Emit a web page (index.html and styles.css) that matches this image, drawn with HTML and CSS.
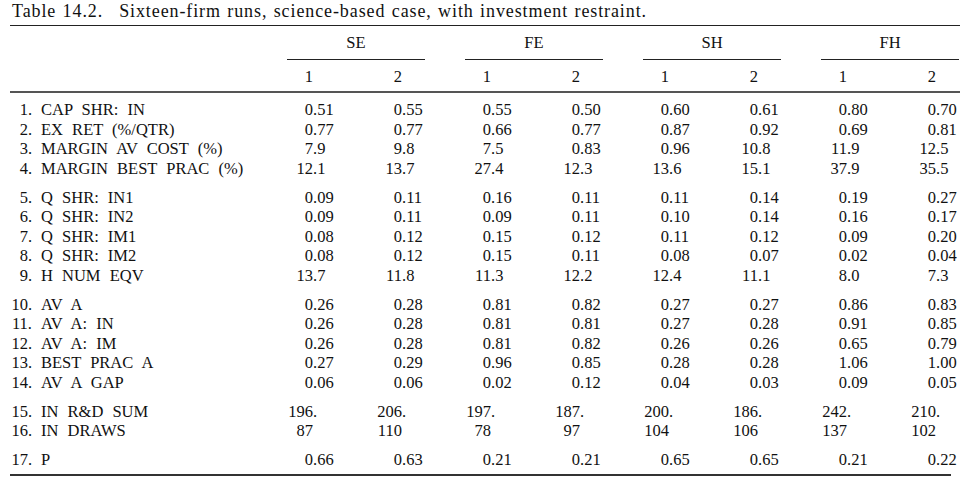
FILE: index.html
```html
<!DOCTYPE html>
<html lang="en">
<head>
<meta charset="utf-8">
<title>Table 14.2</title>
<link rel="stylesheet" href="styles.css">
</head>
<body>
<div class="page">
  <h1 class="title"><span class="tnum">Table 14.2.</span>Sixteen-firm runs, science-based case, with investment restraint.</h1>
  <div class="thead">
    <div class="row groups">
      <div class="lab"></div>
      <div class="grp">SE</div>
      <div class="grp">FE</div>
      <div class="grp">SH</div>
      <div class="grp">FH</div>
    </div>
    <div class="row subs">
      <div class="lab"></div>
      <div class="v"><span class="i">1</span></div>
      <div class="v"><span class="i">2</span></div>
      <div class="v"><span class="i">1</span></div>
      <div class="v"><span class="i">2</span></div>
      <div class="v"><span class="i">1</span></div>
      <div class="v"><span class="i">2</span></div>
      <div class="v"><span class="i">1</span></div>
      <div class="v"><span class="i">2</span></div>
    </div>
  </div>
  <div class="tbody">
    <div class="sect">
      <div class="row"><div class="lab"><span class="n">1.</span>CAP SHR: IN</div>
        <div class="v"><span class="i">0</span>.51</div><div class="v"><span class="i">0</span>.55</div><div class="v"><span class="i">0</span>.55</div><div class="v"><span class="i">0</span>.50</div><div class="v"><span class="i">0</span>.60</div><div class="v"><span class="i">0</span>.61</div><div class="v"><span class="i">0</span>.80</div><div class="v"><span class="i">0</span>.70</div></div>
      <div class="row"><div class="lab"><span class="n">2.</span>EX RET (%/QTR)</div>
        <div class="v"><span class="i">0</span>.77</div><div class="v"><span class="i">0</span>.77</div><div class="v"><span class="i">0</span>.66</div><div class="v"><span class="i">0</span>.77</div><div class="v"><span class="i">0</span>.87</div><div class="v"><span class="i">0</span>.92</div><div class="v"><span class="i">0</span>.69</div><div class="v"><span class="i">0</span>.81</div></div>
      <div class="row"><div class="lab"><span class="n">3.</span>MARGIN AV COST (%)</div>
        <div class="v"><span class="i">7</span>.9</div><div class="v"><span class="i">9</span>.8</div><div class="v"><span class="i">7</span>.5</div><div class="v"><span class="i">0</span>.83</div><div class="v"><span class="i">0</span>.96</div><div class="v"><span class="i">10</span>.8</div><div class="v"><span class="i">11</span>.9</div><div class="v"><span class="i">12</span>.5</div></div>
      <div class="row"><div class="lab"><span class="n">4.</span>MARGIN BEST PRAC (%)</div>
        <div class="v"><span class="i">12</span>.1</div><div class="v"><span class="i">13</span>.7</div><div class="v"><span class="i">27</span>.4</div><div class="v"><span class="i">12</span>.3</div><div class="v"><span class="i">13</span>.6</div><div class="v"><span class="i">15</span>.1</div><div class="v"><span class="i">37</span>.9</div><div class="v"><span class="i">35</span>.5</div></div>
    </div>
    <div class="sect">
      <div class="row"><div class="lab"><span class="n">5.</span>Q SHR: IN1</div>
        <div class="v"><span class="i">0</span>.09</div><div class="v"><span class="i">0</span>.11</div><div class="v"><span class="i">0</span>.16</div><div class="v"><span class="i">0</span>.11</div><div class="v"><span class="i">0</span>.11</div><div class="v"><span class="i">0</span>.14</div><div class="v"><span class="i">0</span>.19</div><div class="v"><span class="i">0</span>.27</div></div>
      <div class="row"><div class="lab"><span class="n">6.</span>Q SHR: IN2</div>
        <div class="v"><span class="i">0</span>.09</div><div class="v"><span class="i">0</span>.11</div><div class="v"><span class="i">0</span>.09</div><div class="v"><span class="i">0</span>.11</div><div class="v"><span class="i">0</span>.10</div><div class="v"><span class="i">0</span>.14</div><div class="v"><span class="i">0</span>.16</div><div class="v"><span class="i">0</span>.17</div></div>
      <div class="row"><div class="lab"><span class="n">7.</span>Q SHR: IM1</div>
        <div class="v"><span class="i">0</span>.08</div><div class="v"><span class="i">0</span>.12</div><div class="v"><span class="i">0</span>.15</div><div class="v"><span class="i">0</span>.12</div><div class="v"><span class="i">0</span>.11</div><div class="v"><span class="i">0</span>.12</div><div class="v"><span class="i">0</span>.09</div><div class="v"><span class="i">0</span>.20</div></div>
      <div class="row"><div class="lab"><span class="n">8.</span>Q SHR: IM2</div>
        <div class="v"><span class="i">0</span>.08</div><div class="v"><span class="i">0</span>.12</div><div class="v"><span class="i">0</span>.15</div><div class="v"><span class="i">0</span>.11</div><div class="v"><span class="i">0</span>.08</div><div class="v"><span class="i">0</span>.07</div><div class="v"><span class="i">0</span>.02</div><div class="v"><span class="i">0</span>.04</div></div>
      <div class="row"><div class="lab"><span class="n">9.</span>H NUM EQV</div>
        <div class="v"><span class="i">13</span>.7</div><div class="v"><span class="i">11</span>.8</div><div class="v"><span class="i">11</span>.3</div><div class="v"><span class="i">12</span>.2</div><div class="v"><span class="i">12</span>.4</div><div class="v"><span class="i">11</span>.1</div><div class="v"><span class="i">8</span>.0</div><div class="v"><span class="i">7</span>.3</div></div>
    </div>
    <div class="sect">
      <div class="row"><div class="lab"><span class="n">10.</span>AV A</div>
        <div class="v"><span class="i">0</span>.26</div><div class="v"><span class="i">0</span>.28</div><div class="v"><span class="i">0</span>.81</div><div class="v"><span class="i">0</span>.82</div><div class="v"><span class="i">0</span>.27</div><div class="v"><span class="i">0</span>.27</div><div class="v"><span class="i">0</span>.86</div><div class="v"><span class="i">0</span>.83</div></div>
      <div class="row"><div class="lab"><span class="n">11.</span>AV A: IN</div>
        <div class="v"><span class="i">0</span>.26</div><div class="v"><span class="i">0</span>.28</div><div class="v"><span class="i">0</span>.81</div><div class="v"><span class="i">0</span>.81</div><div class="v"><span class="i">0</span>.27</div><div class="v"><span class="i">0</span>.28</div><div class="v"><span class="i">0</span>.91</div><div class="v"><span class="i">0</span>.85</div></div>
      <div class="row"><div class="lab"><span class="n">12.</span>AV A: IM</div>
        <div class="v"><span class="i">0</span>.26</div><div class="v"><span class="i">0</span>.28</div><div class="v"><span class="i">0</span>.81</div><div class="v"><span class="i">0</span>.82</div><div class="v"><span class="i">0</span>.26</div><div class="v"><span class="i">0</span>.26</div><div class="v"><span class="i">0</span>.65</div><div class="v"><span class="i">0</span>.79</div></div>
      <div class="row"><div class="lab"><span class="n">13.</span>BEST PRAC A</div>
        <div class="v"><span class="i">0</span>.27</div><div class="v"><span class="i">0</span>.29</div><div class="v"><span class="i">0</span>.96</div><div class="v"><span class="i">0</span>.85</div><div class="v"><span class="i">0</span>.28</div><div class="v"><span class="i">0</span>.28</div><div class="v"><span class="i">1</span>.06</div><div class="v"><span class="i">1</span>.00</div></div>
      <div class="row"><div class="lab"><span class="n">14.</span>AV A GAP</div>
        <div class="v"><span class="i">0</span>.06</div><div class="v"><span class="i">0</span>.06</div><div class="v"><span class="i">0</span>.02</div><div class="v"><span class="i">0</span>.12</div><div class="v"><span class="i">0</span>.04</div><div class="v"><span class="i">0</span>.03</div><div class="v"><span class="i">0</span>.09</div><div class="v"><span class="i">0</span>.05</div></div>
    </div>
    <div class="sect">
      <div class="row"><div class="lab"><span class="n">15.</span>IN R&amp;D SUM</div>
        <div class="v"><span class="i">196</span>.</div><div class="v"><span class="i">206</span>.</div><div class="v"><span class="i">197</span>.</div><div class="v"><span class="i">187</span>.</div><div class="v"><span class="i">200</span>.</div><div class="v"><span class="i">186</span>.</div><div class="v"><span class="i">242</span>.</div><div class="v"><span class="i">210</span>.</div></div>
      <div class="row"><div class="lab"><span class="n">16.</span>IN DRAWS</div>
        <div class="v"><span class="i">87</span></div><div class="v"><span class="i">110</span></div><div class="v"><span class="i">78</span></div><div class="v"><span class="i">97</span></div><div class="v"><span class="i">104</span></div><div class="v"><span class="i">106</span></div><div class="v"><span class="i">137</span></div><div class="v"><span class="i">102</span></div></div>
    </div>
    <div class="sect">
      <div class="row"><div class="lab"><span class="n">17.</span>P</div>
        <div class="v"><span class="i">0</span>.66</div><div class="v"><span class="i">0</span>.63</div><div class="v"><span class="i">0</span>.21</div><div class="v"><span class="i">0</span>.21</div><div class="v"><span class="i">0</span>.65</div><div class="v"><span class="i">0</span>.65</div><div class="v"><span class="i">0</span>.21</div><div class="v"><span class="i">0</span>.22</div></div>
    </div>
  </div>
</div>
</body>
</html>
```
FILE: styles.css
```css
html, body {
  margin: 0;
  padding: 0;
  background: #ffffff;
}
body {
  font-family: "Liberation Serif", "Times New Roman", serif;
  color: #111111;
  font-size: 16.5px;
}
.page {
  padding: 0 4px 0 10px;
}
.title {
  margin: 0;
  padding-left: 2px;
  font-size: 18px;
  font-weight: normal;
  line-height: 22px;
  letter-spacing: 0.9px;
  word-spacing: 1px;
  white-space: nowrap;
}
.tnum {
  margin-right: 16px;
}
.thead {
  margin-top: 3px;
  border-top: 1px solid #222222;
  border-bottom: 2px solid #555555;
  padding-top: 6.6px;
  padding-bottom: 4.4px;
}
.row {
  display: grid;
  grid-template-columns: 269px repeat(7, 89px) 58px;
  line-height: 19.5px;
  white-space: nowrap;
}
.groups {
  line-height: 20px;
}
.grp {
  grid-column: span 2;
  justify-self: start;
  width: 138px;
  margin-left: 8px;
  text-align: center;
  padding-bottom: 6.4px;
  border-bottom: 1px solid #222222;
}
.subs {
  line-height: 20px;
  margin-top: 6.6px;
}
.v {
  display: flex;
}
.i {
  flex: none;
  width: 34px;
  text-align: right;
}
.lab {
  word-spacing: 5px;
}
.n {
  display: inline-block;
  width: 22px;
  margin-right: 9px;
  text-align: right;
  word-spacing: 0;
}
.tbody {
  padding-top: 7.5px;
  padding-bottom: 4px;
  margin-right: 9px;
  border-bottom: 2px solid #333333;
}
.sect + .sect {
  margin-top: 9.5px;
}
```
